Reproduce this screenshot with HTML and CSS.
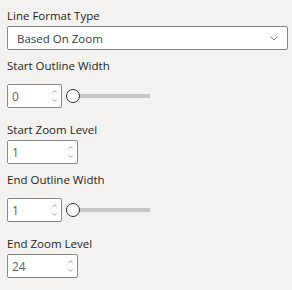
FILE: index.html
```html
<!DOCTYPE html>
<html lang="en">
<head>
  <meta charset="UTF-8">
  <title>Line Format</title>
  <link rel="stylesheet" href="styles.css">
</head>
<body>

<div class="pane">
  <div class="field">
    <div class="label">Line Format Type</div>
    <div class="dropdown">
      <span>Based On Zoom</span>
      <svg class="chevron" width="8" height="5" viewBox="0 0 8 5"><path d="M0.5 0.5 L4 4 L7.5 0.5" fill="none" stroke="#8a8886" stroke-width="1"/></svg>
    </div>
  </div>

  <div class="field">
    <div class="label">Start Outline Width</div>
    <div class="slider-row">
      <div class="spin narrow">
        <span class="value">0</span>
        <div class="arrows">
          <svg width="5" height="3" viewBox="0 0 5 3"><path d="M0.5 2.8 L2.5 0.6 L4.5 2.8" fill="none" stroke="#a19f9d" stroke-width="1"/></svg>
          <svg width="5" height="3" viewBox="0 0 5 3"><path d="M0.5 0.2 L2.5 2.4 L4.5 0.2" fill="none" stroke="#a19f9d" stroke-width="1"/></svg>
        </div>
      </div>
      <div class="slider">
        <div class="track"></div>
        <div class="thumb"></div>
      </div>
    </div>
  </div>

  <div class="field">
    <div class="label">Start Zoom Level</div>
    <div class="spin wide">
      <span class="value">1</span>
      <div class="arrows">
        <svg width="5" height="3" viewBox="0 0 5 3"><path d="M0.5 2.8 L2.5 0.6 L4.5 2.8" fill="none" stroke="#a19f9d" stroke-width="1"/></svg>
        <svg width="5" height="3" viewBox="0 0 5 3"><path d="M0.5 0.2 L2.5 2.4 L4.5 0.2" fill="none" stroke="#a19f9d" stroke-width="1"/></svg>
      </div>
    </div>
  </div>

  <div class="field">
    <div class="label">End Outline Width</div>
    <div class="slider-row">
      <div class="spin narrow">
        <span class="value">1</span>
        <div class="arrows">
          <svg width="5" height="3" viewBox="0 0 5 3"><path d="M0.5 2.8 L2.5 0.6 L4.5 2.8" fill="none" stroke="#a19f9d" stroke-width="1"/></svg>
          <svg width="5" height="3" viewBox="0 0 5 3"><path d="M0.5 0.2 L2.5 2.4 L4.5 0.2" fill="none" stroke="#a19f9d" stroke-width="1"/></svg>
        </div>
      </div>
      <div class="slider">
        <div class="track"></div>
        <div class="thumb"></div>
      </div>
    </div>
  </div>

  <div class="field">
    <div class="label">End Zoom Level</div>
    <div class="spin wide">
      <span class="value">24</span>
      <div class="arrows">
        <svg width="5" height="3" viewBox="0 0 5 3"><path d="M0.5 2.8 L2.5 0.6 L4.5 2.8" fill="none" stroke="#a19f9d" stroke-width="1"/></svg>
        <svg width="5" height="3" viewBox="0 0 5 3"><path d="M0.5 0.2 L2.5 2.4 L4.5 0.2" fill="none" stroke="#a19f9d" stroke-width="1"/></svg>
      </div>
    </div>
  </div>
</div>

</body>
</html>
```

FILE: styles.css
```css
body {
  margin: 0;
  background-color: #f3f2f1;
  font-family: "Open Sans", "Noto Sans", sans-serif;
  color: #252423;
}

.pane {
  padding: 8px 4px 0 7px;
}

.field {
  margin-bottom: 8px;
}

.label {
  font-size: 11.5px;
  line-height: 16px;
  margin-bottom: 2px;
}

.field .label + .spin {
  margin-top: 2px;
}

.dropdown {
  box-sizing: border-box;
  height: 24px;
  background-color: #fff;
  border: 1px solid #8a8886;
  border-radius: 2px;
  display: flex;
  align-items: center;
  justify-content: space-between;
  padding: 0 9px 0 9px;
  font-size: 11.5px;
  color: #3b3a39;
}

.slider-row {
  display: flex;
  align-items: center;
  padding: 8px 0 6px;
}

.spin {
  box-sizing: border-box;
  height: 24px;
  background-color: #fff;
  border: 1px solid #8a8886;
  border-radius: 2px;
  display: flex;
  align-items: center;
  justify-content: space-between;
  padding: 0 4px 0 4px;
  font-size: 12px;
  color: #605e5c;
}

.spin.narrow {
  width: 55px;
}

.spin.wide {
  width: 71px;
}

.arrows {
  display: flex;
  flex-direction: column;
  gap: 6px;
}

.arrows svg {
  display: block;
}

.slider {
  position: relative;
  margin-left: 4px;
  width: 84px;
  height: 14px;
  display: flex;
  align-items: center;
}

.track {
  width: 100%;
  height: 4px;
  background-color: #c8c6c4;
}

.thumb {
  position: absolute;
  left: 0;
  top: 0;
  box-sizing: border-box;
  width: 14px;
  height: 14px;
  border-radius: 50%;
  border: 1.5px solid #323130;
  background-color: #fff;
}
```
